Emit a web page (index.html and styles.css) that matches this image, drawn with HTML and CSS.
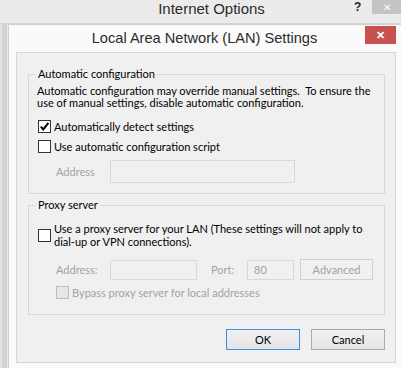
FILE: index.html
```html
<!DOCTYPE html>
<html lang="en">
<head>
  <meta charset="UTF-8">
  <title>Local Area Network (LAN) Settings</title>
  <link rel="stylesheet" href="styles.css">
</head>
<body>
  <div class="parent">
    <div class="parent-titlebar">
      <span class="parent-title">Internet Options</span>
      <span class="help">?</span>
      <span class="parent-close">&#x2715;</span>
    </div>
    <div class="parent-body">
      <div class="dialog">
        <div class="titlebar">
          <span class="title">Local Area Network (LAN) Settings</span>
          <span class="close">&#x2715;</span>
        </div>
        <div class="client">
          <fieldset class="group group-auto">
            <legend>Automatic configuration</legend>
            <p class="desc">Automatic configuration may override manual settings.&nbsp; To ensure the<br>use of manual settings, disable automatic configuration.</p>
            <label class="check">
              <span class="box checked">
                <svg viewBox="0 0 11 11" width="11" height="11"><path d="M1.8 5.6 L4.3 8.4 L9.4 1.8" fill="none" stroke="#000" stroke-width="2"/></svg>
              </span>
              Automatically detect settings
            </label>
            <label class="check">
              <span class="box"></span>
              Use automatic configuration script
            </label>
            <div class="field-row address-row">
              <span class="muted label-address">Address</span>
              <span class="input input-address"></span>
            </div>
          </fieldset>

          <fieldset class="group group-proxy">
            <legend>Proxy server</legend>
            <label class="check check-two">
              <span class="box"></span>
              <span>Use a proxy server for your LAN (These settings will not apply to<br>dial-up or VPN connections).</span>
            </label>
            <div class="field-row proxy-row">
              <span class="muted label-proxy">Address:</span>
              <span class="input input-proxy"></span>
              <span class="muted label-port">Port:</span>
              <span class="input input-port">80</span>
              <span class="btn btn-disabled">Advanced</span>
            </div>
            <label class="check check-bypass">
              <span class="box box-disabled"></span>
              <span class="muted">Bypass proxy server for local addresses</span>
            </label>
          </fieldset>

          <div class="actions">
            <span class="btn btn-default">OK</span>
            <span class="btn">Cancel</span>
          </div>
        </div>
      </div>
    </div>
  </div>
</body>
</html>
```

FILE: styles.css
```css
html, body {
  margin: 0;
  height: 100%;
  overflow: hidden;
}
body {
  font-family: Lato, "Liberation Sans", sans-serif;
  font-size: 11px;
  color: #000;
  background-color: #f0f0f0;
}
.parent {
  width: 100%;
  height: 100%;
  display: flex;
  flex-direction: column;
}
.parent-titlebar {
  height: 23px;
  flex: none;
  background-color: #ebebeb;
  border-bottom: 1px solid #d4d4d4;
  position: relative;
  display: flex;
  justify-content: center;
}
.parent-title {
  font-family: "Liberation Sans", sans-serif;
  font-size: 15px;
  color: #2b2b2b;
  line-height: 18px;
  margin-left: 22px;
}
.help {
  position: absolute;
  left: 354px;
  top: 0;
  font-family: "Liberation Sans", sans-serif;
  font-size: 12px;
  font-weight: bold;
  color: #222;
  line-height: 14px;
}
.parent-close {
  position: absolute;
  right: 0;
  top: 0;
  width: 29px;
  height: 14px;
  background-color: #c4c4c4;
  color: #fff;
  font-size: 10px;
  line-height: 14px;
  text-align: center;
}
.parent-body {
  flex: 1;
  padding-left: 8px;
  background: linear-gradient(to right, #e4e4e4 0, #e4e4e4 2px, #d3d3d3 2px, #d3d3d3 7px, #e8e8e8 7px, #e8e8e8 8px, #f0f0f0 8px);
}
.dialog {
  height: 100%;
  box-sizing: border-box;
  border: 1px solid #cfcfcf;
  border-right: none;
  border-bottom: none;
  background-color: #fafafa;
  padding: 0 5px 5px 7px;
}
.titlebar {
  height: 27px;
  position: relative;
  display: flex;
  justify-content: center;
  align-items: center;
}
.title {
  font-family: "Liberation Sans", sans-serif;
  font-size: 14.6px;
  color: #2b2b2b;
  margin-left: -3px;
  margin-top: -1px;
}
.close {
  position: absolute;
  left: 349px;
  top: 1px;
  width: 31px;
  height: 18px;
  background-color: #c75050;
  color: #fff;
  font-size: 11px;
  font-weight: bold;
  line-height: 18px;
  text-align: center;
}
.client {
  border: 1px solid #d6d6d6;
  background-color: #f0f0f0;
  padding: 0 10px 0 11px;
  box-sizing: border-box;
  width: 380px;
  height: 311px;
}
.group {
  margin: 0;
  padding: 0 8px;
  border: 1px solid #d8d8d8;
  min-width: 0;
}
.group legend {
  padding: 0 2px;
  margin-left: -1px;
  line-height: 14px;
}
.group-auto {
  margin-top: 14px;
  height: 127px;
  box-sizing: border-box;
}
.group-proxy {
  margin-top: 4px;
  height: 117px;
  box-sizing: border-box;
}
.desc {
  margin: 4px 0 0;
  line-height: 12px;
  white-space: nowrap;
}
.check {
  display: flex;
  align-items: center;
  gap: 3px;
  margin-left: 1px;
  white-space: nowrap;
}
.group-auto .check {
  margin-top: 10px;
  height: 14px;
}
.group-auto .check + .check {
  margin-top: 6px;
}
.box {
  width: 11px;
  height: 11px;
  border: 1px solid #333;
  background-color: #fff;
  flex: none;
  display: flex;
  align-items: center;
  justify-content: center;
}
.box svg {
  width: 11px;
  height: 11px;
}
.box-disabled {
  border-color: #bcbcbc;
  background-color: #e6e6e6;
}
.muted {
  color: #a3a3a3;
}
.field-row {
  display: flex;
  align-items: center;
}
.address-row {
  margin-top: 7px;
  margin-left: 19px;
}
.label-address {
  width: 54px;
}
.input {
  height: 20px;
  border: 1px solid #d9d9d9;
  box-sizing: border-box;
  color: #a3a3a3;
  padding-left: 6px;
  line-height: 18px;
}
.input-address {
  width: 185px;
  height: 23px;
}
.check-two {
  margin-top: 10px;
  line-height: 13px;
}
.proxy-row {
  margin-top: 11px;
  margin-left: 19px;
}
.label-proxy {
  width: 54px;
}
.input-proxy {
  width: 87px;
}
.label-port {
  margin-left: 14px;
  width: 36px;
}
.input-port {
  width: 47px;
}
.btn {
  display: inline-flex;
  align-items: center;
  justify-content: center;
  height: 21px;
  box-sizing: border-box;
  border: 1px solid #acacac;
  background: linear-gradient(#f0f0f0, #e5e5e5);
  color: #000;
}
.btn-disabled {
  margin-left: 6px;
  width: 73px;
  border-color: #d0d0d0;
  background: #f0f0f0;
  color: #a3a3a3;
}
.check-bypass {
  margin-top: 6px;
  margin-left: 19px;
}
.actions {
  display: flex;
  justify-content: flex-end;
  gap: 11px;
  margin-top: 14px;
}
.actions .btn {
  width: 74px;
}
.btn-default {
  border-color: #3c8fe6;
  width: 73px;
}
```
